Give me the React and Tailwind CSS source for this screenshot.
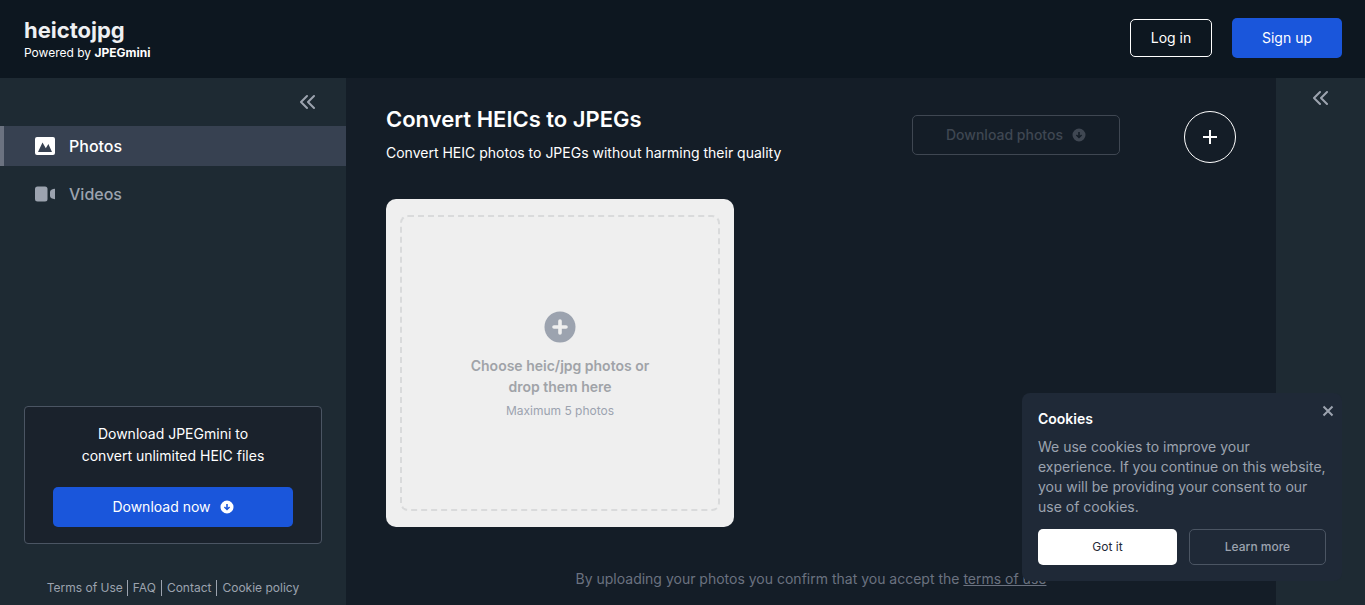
const footerLinks = ["Terms of Use", "FAQ", "Contact", "Cookie policy"];

function DoubleChevron() {
  return (
    <svg width="16" height="16" viewBox="0 0 16 16" fill="none" stroke="currentColor" strokeWidth="2" strokeLinecap="round" strokeLinejoin="round">
      <path d="M7 2L1 8l6 6M14 2L8 8l6 6" />
    </svg>
  );
}

function PhotoIcon() {
  return (
    <svg width="20" height="18" viewBox="0 0 20 18">
      <path
        fill="currentColor"
        fillRule="evenodd"
        d="M2 0h16a2 2 0 0 1 2 2v14a2 2 0 0 1-2 2H2a2 2 0 0 1-2-2V2a2 2 0 0 1 2-2zM3 15h14l-3.600-8-2.600 4.200L7.500 5.500z"
      />
    </svg>
  );
}

function VideoIcon() {
  return (
    <svg width="20" height="16" viewBox="0 0 20 16" fill="currentColor">
      <rect x="0" y="0.5" width="12.5" height="15" rx="2.5" />
      <path d="M15 6c0-1.700 2.200-3 5-3.200v10.400c-2.800-.2-5-1.500-5-3.200z" />
    </svg>
  );
}

function DownloadIcon() {
  return (
    <svg width="14" height="14" viewBox="0 0 14 14">
      <path
        fill="currentColor"
        fillRule="evenodd"
        d="M7 .5a6.500 6.500 0 1 1 0 13a6.500 6.500 0 1 1 0-13zM6.200 4v3.700L4.900 6.400 3.900 7.400 7 10.500l3.100-3.100-1-1-1.300 1.300V4z"
      />
    </svg>
  );
}

function Sidebar() {
  return (
    <aside className="w-[346px] shrink-0 bg-[#1e2a33] flex flex-col">
      <div className="h-12 flex items-center justify-end pr-[30px]">
        <button aria-label="Collapse menu" className="text-[#9ca3af]">
          <DoubleChevron />
        </button>
      </div>

      <nav className="flex flex-col gap-2">
        <a href="#photos" className="h-10 flex items-center border-l-4 border-[#6b7280] bg-[#374151] pl-[31px] gap-[14px] font-medium text-white">
          <PhotoIcon />
          Photos
        </a>
        <a href="#videos" className="h-10 flex items-center border-l-4 border-transparent pl-[31px] gap-[14px] font-medium text-[#9ca3af]">
          <VideoIcon />
          Videos
        </a>
      </nav>

      <div className="mt-auto mx-6 px-7 py-4 border border-[#4b5563] rounded bg-[#1a222c] text-center">
        <p className="text-sm leading-[22px] text-white">
          Download JPEGmini to
          <br />
          convert unlimited HEIC files
        </p>
        <button className="mt-5 h-10 w-full flex items-center justify-center gap-[9px] rounded-[5px] bg-[#1a56db] text-sm text-white">
          Download now
          <DownloadIcon />
        </button>
      </div>

      <footer className="mt-9 mb-[9px] flex justify-center text-xs text-[#9ca3af]">
        {footerLinks.map((label, i) => (
          <a key={label} href="#" className={i > 0 ? "border-l border-[#9ca3af] px-[5px] last:pr-0" : "pr-1"}>
            {label}
          </a>
        ))}
      </footer>
    </aside>
  );
}

function DropZone() {
  return (
    <button className="mt-9 w-[348px] h-[328px] px-[14px] py-4 rounded-[10px] bg-[#efefef]">
      <span className="h-full flex flex-col items-center pt-[94px] border-2 border-dashed border-[#d9dadb] rounded-lg">
        <svg width="32" height="32" viewBox="0 0 32 32">
          <circle cx="16" cy="16" r="15.500" fill="#9ca3af" />
          <path d="M16 10v12M10 16h12" stroke="#efefef" strokeWidth="3.600" strokeLinecap="round" />
        </svg>
        <span className="mt-3 text-sm leading-[21px] font-semibold text-[#a0a3a8]">
          Choose heic/jpg photos or
          <br />
          drop them here
        </span>
        <span className="mt-1 text-xs leading-5 text-[#9ca3af]">Maximum 5 photos</span>
      </span>
    </button>
  );
}

function CookieBanner() {
  return (
    <div className="fixed right-[23px] bottom-6 w-80 p-4 rounded-lg bg-[#1f2937]">
      <button aria-label="Close" className="absolute right-2 top-[12px] text-[#9ca3af]">
        <svg width="12" height="12" viewBox="0 0 12 12" fill="none" stroke="currentColor" strokeWidth="2">
          <path d="M1.500 1.500l9 9M10.500 1.500l-9 9" />
        </svg>
      </button>
      <h2 className="text-sm font-semibold text-white">Cookies</h2>
      <p className="mt-2 text-sm text-[#9ca3af]">
        We use cookies to improve your experience. If you continue on this website, you will be providing your consent to our use of cookies.
      </p>
      <div className="mt-3 flex gap-3">
        <button className="flex-1 h-9 rounded-[5px] bg-white text-xs text-[#1f2937]">Got it</button>
        <button className="w-[137px] h-9 rounded-[5px] border border-[#4b5563] text-xs font-medium text-[#9ca3af]">Learn more</button>
      </div>
    </div>
  );
}

function App() {
  return (
    <div className="min-h-screen flex flex-col bg-[#141d27] font-['Inter',sans-serif]">
      <header className="h-[78px] flex items-center justify-between pl-6 pr-[23px] bg-[#0d1720]">
        <div className="text-white">
          <div className="text-[22px] leading-7 font-bold text-[#eef0f2]">heictojpg</div>
          <div className="text-xs leading-[18px]">
            Powered by <b>JPEGmini</b>
          </div>
        </div>
        <div className="flex items-center gap-5 pb-0.5">
          <button className="w-[82px] h-[38px] rounded-[5px] border border-white text-sm text-white">Log in</button>
          <button className="w-[110px] h-10 rounded-[5px] bg-[#1a56db] text-sm text-white">Sign up</button>
        </div>
      </header>

      <div className="flex-1 flex">
        <Sidebar />

        <main className="flex-1 flex flex-col px-10 pt-[27px] pb-4">
          <div className="flex items-end justify-between">
            <div className="text-white">
              <h1 className="text-[22px] leading-7 font-semibold">Convert HEICs to JPEGs</h1>
              <p className="mt-[10px] text-sm">Convert HEIC photos to JPEGs without harming their quality</p>
            </div>
            <div className="flex items-end gap-16">
              <button disabled className="mb-2 w-[208px] h-10 flex items-center justify-center gap-[9px] rounded-[5px] border border-[#3f4752] text-sm font-medium text-[#3f4752]">
                Download photos
                <DownloadIcon />
              </button>
              <button aria-label="Add photos" className="size-[52px] rounded-full border border-white flex items-center justify-center text-white">
                <svg width="14" height="14" viewBox="0 0 14 14" stroke="currentColor" strokeWidth="2">
                  <path d="M7 0v14M0 7h14" />
                </svg>
              </button>
            </div>
          </div>

          <DropZone />

          <p className="mt-auto text-center text-sm text-[#6b7280]">
            By uploading your photos you confirm that you accept the{" "}
            <a href="#" className="underline">terms of use</a>
          </p>
        </main>

        <aside className="w-[89px] shrink-0 bg-[#1e2a33] flex justify-center items-start pt-3">
          <button aria-label="Expand panel" className="text-[#9ca3af]">
            <DoubleChevron />
          </button>
        </aside>
      </div>

      <CookieBanner />
    </div>
  );
}

export default App;
